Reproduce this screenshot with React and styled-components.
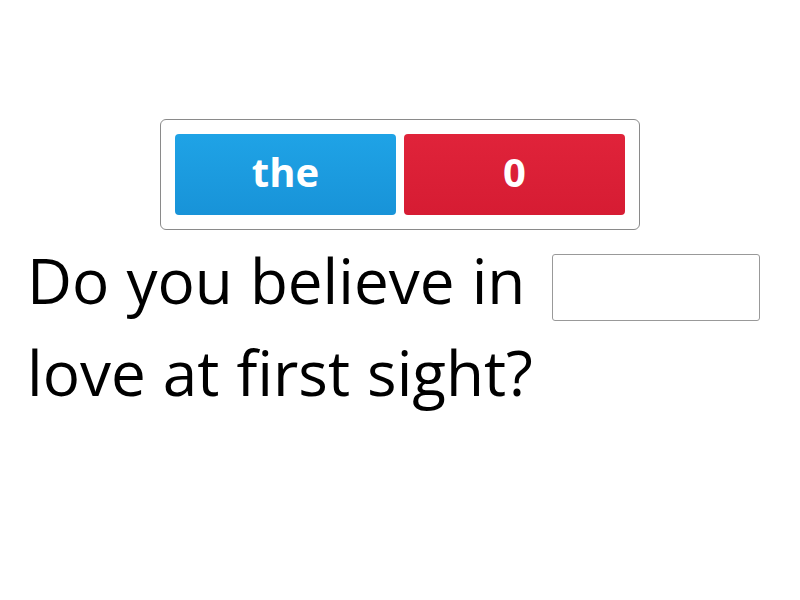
import React from "react";
import styled, { createGlobalStyle } from "styled-components";

const Global = createGlobalStyle`
  body {
    margin: 0;
    background: #fff;
    font-family: "Open Sans", sans-serif;
  }
`;

function App() {
  return (
    <Wrapper>
      <Global />
      <Bar>
        <Tile color="blue">the</Tile>
        <Tile color="red">0</Tile>
      </Bar>
      <Question>
        Do you believe in <Blank /> love at first sight?
      </Question>
    </Wrapper>
  );
}

const Wrapper = styled.div`
  width: 800px;
  height: 600px;
  padding-top: 119px;
  box-sizing: border-box;
`;

const Bar = styled.div`
  width: 480px;
  height: 111px;
  margin: 0 auto;
  box-sizing: border-box;
  border: 1px solid #8a8a8a;
  border-radius: 6px;
  padding: 14px;
  display: grid;
  grid-template-columns: 1fr 1fr;
  gap: 8px;
`;

const Tile = styled.div`
  display: flex;
  align-items: center;
  justify-content: center;
  padding-bottom: 6px;
  border-radius: 4px;
  color: #fff;
  font-weight: 700;
  font-size: 40px;
  background: ${(p) =>
    p.color === "blue"
      ? "linear-gradient(#1fa3e6, #1893d8)"
      : "linear-gradient(#e0233a, #d61c33)"};
`;

const Question = styled.p`
  margin: 4px 0 0 27px;
  font-size: 62px;
  word-spacing: 1px;
  line-height: 92px;
  color: #000;
  width: 760px;
`;

const Blank = styled.span`
  display: inline-block;
  vertical-align: middle;
  width: 208px;
  height: 67px;
  box-sizing: border-box;
  border: 1px solid #999;
  border-radius: 3px;
  margin-left: 10px;
`;

export default App;
